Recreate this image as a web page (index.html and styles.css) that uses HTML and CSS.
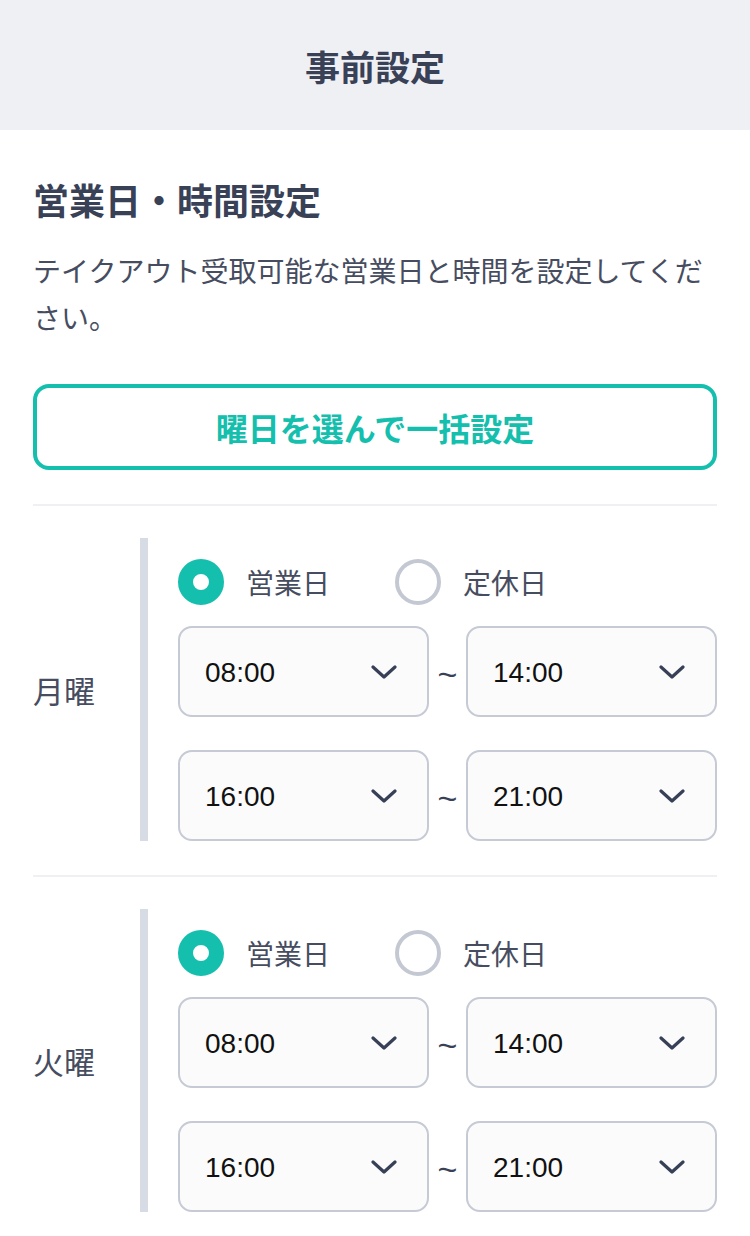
FILE: index.html
```html
<!DOCTYPE html>
<html lang="ja">
<head>
<meta charset="utf-8">
<title>事前設定</title>
<link rel="stylesheet" href="styles.css">
</head>
<body>
<header class="header">事前設定</header>
<main class="content">
  <h2 class="section-title">営業日・時間設定</h2>
  <p class="desc">テイクアウト受取可能な営業日と時間を設定してください。</p>
  <button class="bulk-btn" type="button">曜日を選んで一括設定</button>

  <div class="divider"></div>
  <section class="day">
    <div class="day-label">月曜</div>
    <div class="day-body">
      <div class="radios">
        <label class="radio"><span class="dot on"></span><span class="radio-text">営業日</span></label>
        <label class="radio"><span class="dot"></span><span class="radio-text">定休日</span></label>
      </div>
      <div class="range">
        <div class="select"><span class="time">08:00</span><svg class="chev" viewBox="0 0 26 14"><path d="M2 2 L13 12 L24 2"/></svg></div>
        <span class="tilde">~</span>
        <div class="select"><span class="time">14:00</span><svg class="chev" viewBox="0 0 26 14"><path d="M2 2 L13 12 L24 2"/></svg></div>
      </div>
      <div class="range">
        <div class="select"><span class="time">16:00</span><svg class="chev" viewBox="0 0 26 14"><path d="M2 2 L13 12 L24 2"/></svg></div>
        <span class="tilde">~</span>
        <div class="select"><span class="time">21:00</span><svg class="chev" viewBox="0 0 26 14"><path d="M2 2 L13 12 L24 2"/></svg></div>
      </div>
    </div>
  </section>

  <div class="divider"></div>
  <section class="day">
    <div class="day-label">火曜</div>
    <div class="day-body">
      <div class="radios">
        <label class="radio"><span class="dot on"></span><span class="radio-text">営業日</span></label>
        <label class="radio"><span class="dot"></span><span class="radio-text">定休日</span></label>
      </div>
      <div class="range">
        <div class="select"><span class="time">08:00</span><svg class="chev" viewBox="0 0 26 14"><path d="M2 2 L13 12 L24 2"/></svg></div>
        <span class="tilde">~</span>
        <div class="select"><span class="time">14:00</span><svg class="chev" viewBox="0 0 26 14"><path d="M2 2 L13 12 L24 2"/></svg></div>
      </div>
      <div class="range">
        <div class="select"><span class="time">16:00</span><svg class="chev" viewBox="0 0 26 14"><path d="M2 2 L13 12 L24 2"/></svg></div>
        <span class="tilde">~</span>
        <div class="select"><span class="time">21:00</span><svg class="chev" viewBox="0 0 26 14"><path d="M2 2 L13 12 L24 2"/></svg></div>
      </div>
    </div>
  </section>
</main>
</body>
</html>
```

FILE: styles.css
```css
* { box-sizing: border-box; }
html, body { margin: 0; padding: 0; background: #ffffff; }
body {
  font-family: "Noto Sans CJK JP", "Noto Sans", sans-serif;
  color: #394157;
  width: 750px;
  overflow: hidden;
}
.header {
  height: 130px;
  background: #eff0f4;
  display: flex;
  align-items: center;
  justify-content: center;
  font-size: 35px;
  font-weight: 700;
  color: #394157;
}
.content { padding: 0 33px 40px; }
.section-title {
  margin: 44px 0 0;
  font-size: 36px;
  line-height: 50px;
  font-weight: 700;
}
.desc {
  margin: 23px 0 0;
  font-size: 28px;
  line-height: 47px;
  color: #474d60;
}
.bulk-btn {
  display: block;
  width: 100%;
  height: 86px;
  margin-top: 43px;
  border: 4px solid #14bfad;
  border-radius: 16px;
  background: #ffffff;
  color: #14bfad;
  font-family: "Noto Sans CJK JP", sans-serif;
  font-size: 32px;
  font-weight: 700;
  padding: 0;
}
.divider {
  height: 2px;
  background: #eef0f4;
  margin-top: 34px;
}
.day {
  display: flex;
  align-items: center;
  margin-top: 32px;
}
.day-label {
  width: 107px;
  font-size: 31px;
  color: #474d60;
}
.day-body {
  flex: 1;
  border-left: 8px solid #d7dbe4;
  padding: 21px 0 0 30px;
}
.radios {
  display: flex;
  align-items: center;
  height: 46px;
}
.radio {
  display: flex;
  align-items: center;
  margin-right: 65px;
}
.dot {
  width: 46px;
  height: 46px;
  border-radius: 50%;
  border: 4px solid #c3c8d2;
  background: #ffffff;
  margin-right: 22px;
}
.dot.on {
  border: 15px solid #14bfad;
}
.radio-text {
  font-size: 28px;
  color: #474d60;
}
.range {
  display: flex;
  align-items: center;
  margin-top: 21px;
}
.range + .range { margin-top: 33px; }
.select {
  flex: 1;
  height: 91px;
  border: 2px solid #c5cad5;
  border-radius: 14px;
  background: #fbfbfc;
  display: flex;
  align-items: center;
  justify-content: space-between;
  padding: 0 30px 0 25px;
}
.time {
  font-family: "Liberation Sans", Arial, sans-serif;
  font-size: 28px;
  color: #111111;
  padding-top: 2px;
}
.chev {
  width: 26px;
  height: 14px;
  fill: none;
  stroke: #374057;
  stroke-width: 3.2;
  stroke-linecap: round;
  stroke-linejoin: round;
}
.tilde {
  width: 37px;
  text-align: center;
  font-family: "Liberation Sans", Arial, sans-serif;
  font-size: 34px;
  color: #394157;
  padding-top: 6px;
}
```
